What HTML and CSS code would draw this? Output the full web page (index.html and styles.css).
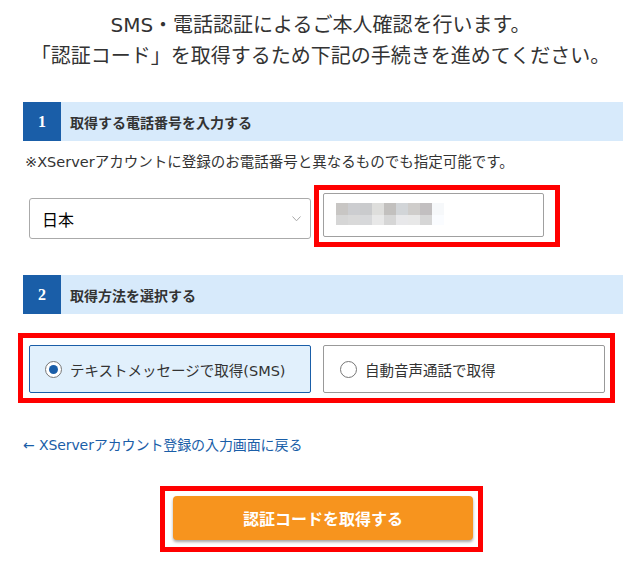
FILE: index.html
```html
<!DOCTYPE html>
<html lang="ja">
<head>
<meta charset="utf-8">
<title>SMS・電話認証</title>
<link rel="stylesheet" href="styles.css">
</head>
<body>
<div class="page">
  <div class="intro">
    <p>SMS・電話認証によるご本人確認を行います。</p>
    <p>「認証コード」を取得するため下記の手続きを進めてください。</p>
  </div>

  <div class="content">
    <div class="step-bar">
      <span class="step-num">1</span>
      <span class="step-title">取得する電話番号を入力する</span>
    </div>
    <p class="note">※XServerアカウントに登録のお電話番号と異なるものでも指定可能です。</p>

    <div class="phone-row">
      <div class="select">
        <span class="select-value">日本</span>
        <svg class="chevron" width="9" height="6" viewBox="0 0 9 6"><path d="M0.5 0.5 L4.5 4.8 L8.5 0.5" fill="none" stroke="#a8a8a8" stroke-width="1"/></svg>
      </div>
      <div class="highlight phone-box">
        <div class="phone-input">
          <div class="mosaic"></div>
        </div>
      </div>
    </div>

    <div class="step-bar step-bar-2">
      <span class="step-num">2</span>
      <span class="step-title">取得方法を選択する</span>
    </div>

    <div class="highlight options">
      <label class="option option-active">
        <span class="radio radio-on"></span>
        <span class="option-text">テキストメッセージで取得(SMS)</span>
      </label>
      <label class="option">
        <span class="radio"></span>
        <span class="option-text">自動音声通話で取得</span>
      </label>
    </div>

    <a class="back-link" href="#">← XServerアカウント登録の入力画面に戻る</a>

    <div class="btn-wrap">
      <div class="highlight btn-box">
        <button class="btn" type="button">認証コードを取得する</button>
      </div>
    </div>
  </div>
</div>
</body>
</html>
```

FILE: styles.css
```css
* { box-sizing: border-box; }

html, body {
  margin: 0;
  padding: 0;
  background: #fff;
}

body {
  font-family: "DejaVu Sans", "Noto Sans CJK JP", sans-serif;
  color: #333;
}

.page {
  width: 641px;
}

.intro {
  padding-top: 10px;
  text-align: center;
  font-size: 20px;
  line-height: 31px;
  color: #333;
}

.intro p {
  margin: 0;
}

.content {
  margin: 30px 18px 0 23px;
  width: 600px;
}

.step-bar {
  display: flex;
  align-items: center;
  height: 39px;
  background: #d7eafb;
}

.step-num {
  width: 38px;
  height: 39px;
  background: #1a5ea8;
  color: #fff;
  font-family: "Liberation Serif", serif;
  font-weight: bold;
  font-size: 16px;
  display: flex;
  align-items: center;
  justify-content: center;
}

.step-title {
  margin-left: 9px;
  font-family: "Noto Sans CJK JP", sans-serif;
  font-weight: bold;
  font-size: 14px;
  color: #333;
}

.note {
  margin: 11px 0 0 2px;
  font-size: 14.5px;
  line-height: 20px;
  font-family: "DejaVu Sans", "Noto Sans CJK JP", sans-serif;
  color: #333;
}

.phone-row {
  display: flex;
  align-items: flex-start;
  margin-top: 13px;
}

.select {
  margin-top: 13px;
  margin-left: 6px;
  width: 282px;
  height: 41px;
  border: 1px solid #aaa;
  border-radius: 3px;
  display: flex;
  align-items: center;
  justify-content: space-between;
  padding: 0 9px 0 12px;
  background: #fff;
}

.select-value {
  font-family: "Noto Sans CJK JP", sans-serif;
  font-size: 16px;
  color: #000;
}

.chevron {
  display: block;
}

.highlight {
  border: 5px solid #ff0000;
  background: #fff;
}

.phone-box {
  margin-left: 3px;
  width: 246px;
  height: 62px;
  padding: 3px 0 0 4px;
}

.phone-input {
  width: 221px;
  height: 44px;
  border: 1px solid #a0a0a0;
  border-radius: 2px;
  padding: 9px 0 0 12px;
}

.mosaic {
  width: 108px;
  height: 22px;
  background:
    linear-gradient(90deg,
      #c8c6c4 0 12px, #cccdd0 12px 24px, #cacbcd 24px 36px, #dededc 36px 48px,
      #c2c0be 48px 60px, #d2d5d8 60px 72px, #cfcdcb 72px 84px, #c2bfc0 84px 96px,
      #f6f8fa 96px 108px) top / 100% 12px no-repeat,
    linear-gradient(90deg,
      #d6d6d6 0 12px, #d9d9d9 12px 24px, #d7d8da 24px 36px, #e8e8e8 36px 48px,
      #d6d6d6 48px 60px, #e8e8ea 60px 72px, #e8e8e8 72px 84px, #d6d6d6 84px 96px,
      #fafcff 96px 108px) bottom / 100% 10px no-repeat;
}

.step-bar-2 {
  margin-top: 28px;
}

.options {
  margin: 19px 0 0 -5px;
  width: 597px;
  height: 70px;
  display: flex;
  gap: 12px;
  padding: 7px 0 0 6px;
}

.option {
  width: 282px;
  height: 48px;
  border: 1px solid #999;
  border-radius: 2px;
  display: flex;
  align-items: center;
  padding-left: 16px;
  background: #fff;
}

.option-active {
  background: #e1f0fc;
  border-color: #1a5ea8;
  padding-left: 15px;
}

.radio {
  width: 17px;
  height: 17px;
  border: 1px solid #777;
  border-radius: 50%;
  background: #fff;
  flex: none;
  position: relative;
}

.radio-on::after {
  content: "";
  position: absolute;
  left: 3px;
  top: 3px;
  width: 9px;
  height: 9px;
  border-radius: 50%;
  background: #1a5ea8;
}

.option-text {
  margin-left: 8px;
  font-size: 14.5px;
  color: #333;
  font-family: "DejaVu Sans", "Noto Sans CJK JP", sans-serif;
}

.back-link {
  display: block;
  margin-top: 32px;
  font-size: 14px;
  line-height: 20px;
  color: #1a5ea8;
  text-decoration: none;
  font-family: "DejaVu Sans", "Noto Sans CJK JP", sans-serif;
  letter-spacing: -0.1px;
}

.btn-wrap {
  margin-top: 31px;
  display: flex;
  justify-content: center;
  margin-left: -23px;
  width: 641px;
  padding-left: 2px;
}

.btn-box {
  width: 323px;
  height: 66px;
  padding: 5px 0 0 8px;
}

.btn {
  width: 300px;
  height: 44px;
  border: none;
  border-radius: 4px;
  background: #f7941e;
  color: #fff;
  font-family: "Noto Sans CJK JP", sans-serif;
  font-weight: bold;
  font-size: 16px;
  box-shadow: 0 2px 3px rgba(0, 0, 0, 0.35);
  cursor: pointer;
  padding: 0;
}
```
